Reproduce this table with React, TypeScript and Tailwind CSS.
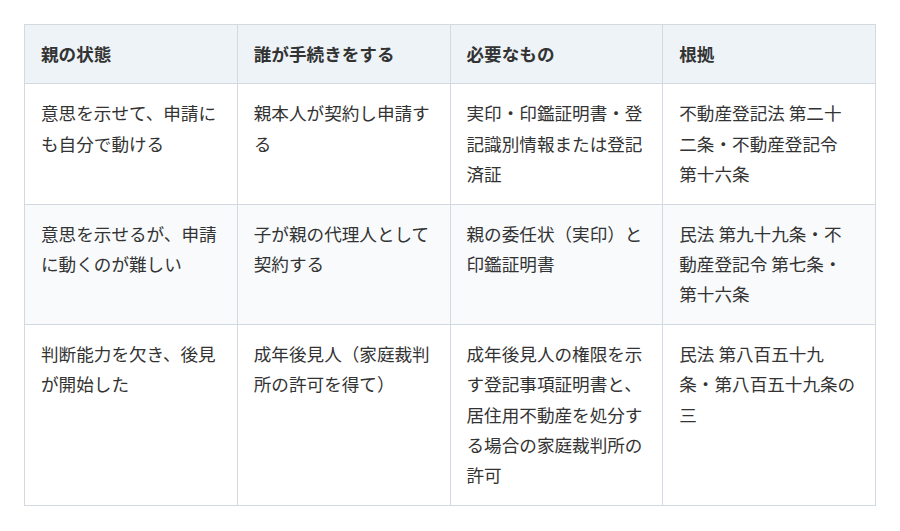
import React from "react";

const headers = ["親の状態", "誰が手続きをする", "必要なもの", "根拠"];
const rows = [
  [
    "意思を示せて、申請にも自分で動ける",
    "親本人が契約し申請する",
    "実印・印鑑証明書・登記識別情報または登記済証",
    "不動産登記法 第二十二条・不動産登記令 第十六条",
  ],
  [
    "意思を示せるが、申請に動くのが難しい",
    "子が親の代理人として契約する",
    "親の委任状（実印）と印鑑証明書",
    "民法 第九十九条・不動産登記令 第七条・第十六条",
  ],
  [
    "判断能力を欠き、後見が開始した",
    "成年後見人（家庭裁判所の許可を得て）",
    "成年後見人の権限を示す登記事項証明書と、居住用不動産を処分する場合の家庭裁判所の許可",
    "民法 第八百五十九条・第八百五十九条の三",
  ],
];

export default function App() {
  return (
    <div
      className="bg-white w-[900px] h-[531px] pt-[24px] pl-[24px]"
      style={{ fontFamily: '"Noto Sans CJK JP", "Noto Sans", sans-serif' }}
    >
      <table className="w-[852px] table-fixed border-collapse text-[17.6px] leading-[30.4px] text-[#333333]">
        <thead>
          <tr className="bg-[#eef3f8]">
            {headers.map((h) => (
              <th
                key={h}
                className="border border-[#d3d9e0] px-[16px] py-[14px] text-left font-bold align-top"
              >
                {h}
              </th>
            ))}
          </tr>
        </thead>
        <tbody>
          {rows.map((r, i) => (
            <tr key={i} className={i % 2 === 1 ? "bg-[#f8fafc]" : "bg-white"}>
              {r.map((c, j) => (
                <td
                  key={j}
                  className="border border-[#d3d9e0] px-[16px] py-[14px] align-top"
                >
                  {c}
                </td>
              ))}
            </tr>
          ))}
        </tbody>
      </table>
    </div>
  );
}
